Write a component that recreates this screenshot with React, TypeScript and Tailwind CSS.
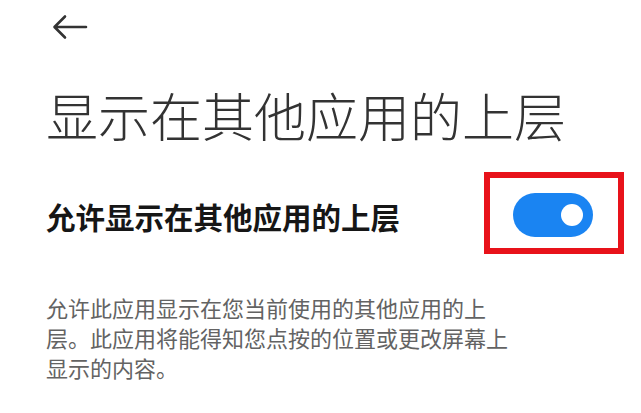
import React from 'react'

const cjk = { fontFamily: '"Noto Sans CJK SC", "Noto Sans", sans-serif' }

function BackArrow() {
  return (
    <svg width="40" height="28" viewBox="0 0 40 28" fill="none" className="ml-[4px]">
      <path d="M36 14H5M15 3.5L4.5 14L15 24.5" stroke="#333" strokeWidth="2.6" strokeLinecap="round" strokeLinejoin="round" />
    </svg>
  )
}

function Toggle({ on }: { on: boolean }) {
  return (
    <div className={`w-[80px] h-[44px] rounded-full flex items-center pr-[10px] ${on ? 'bg-[#1a84f2] justify-end' : 'bg-[#d9d9d9] justify-start pl-[10px]'}`}>
      <div className="w-[22px] h-[22px] rounded-full bg-white" />
    </div>
  )
}

export default function App() {
  return (
    <div className="w-[641px] h-[413px] bg-white overflow-hidden pl-[46px] flex flex-col" style={cjk}>
      <div className="h-[54px] flex items-center">
        <BackArrow />
      </div>

      <h1 className="mt-[35px] text-[52px] leading-none font-light text-[#333] whitespace-nowrap">
        显示在其他应用的上层
      </h1>

      <div className="mt-[31px] flex items-start pr-[17px]">
        <span className="mt-[30px] text-[29.5px] leading-[29px] font-bold text-[#161616] whitespace-nowrap">
          允许显示在其他应用的上层
        </span>
        <div className="ml-auto w-[140px] h-[82px] border-[6px] border-[#e8121a] pt-[15px] pl-[23px]">
          <Toggle on />
        </div>
      </div>

      <p className="mt-[38px] text-[22px] leading-[30px] text-[#636363]">
        <span className="block whitespace-nowrap">允许此应用显示在您当前使用的其他应用的上</span>
        <span className="block whitespace-nowrap">层。此应用将能得知您点按的位置或更改屏幕上</span>
        <span className="block whitespace-nowrap">显示的内容。</span>
      </p>
    </div>
  )
}
